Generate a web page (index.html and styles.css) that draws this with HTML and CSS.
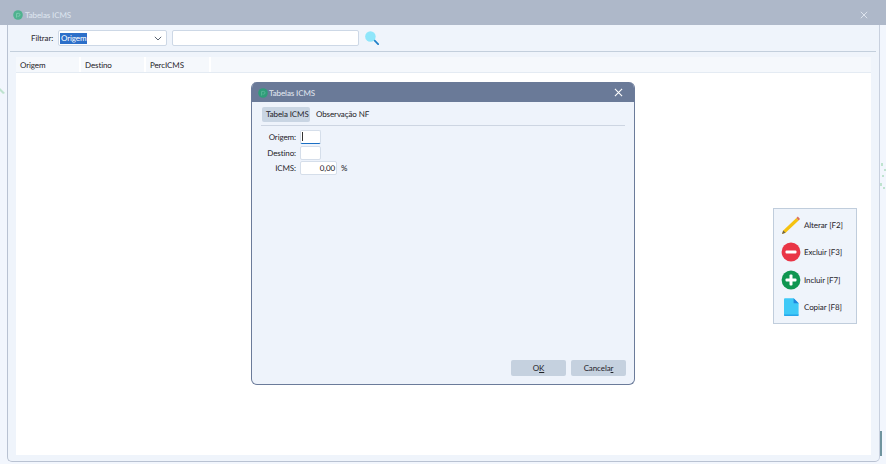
FILE: index.html
```html
<!DOCTYPE html>
<html lang="pt-BR">
<head>
    <meta charset="UTF-8">
    <meta name="viewport" content="width=device-width, initial-scale=1.0">
    <title>Tabelas ICMS</title>
    <link rel="stylesheet" href="styles.css">
</head>
<body>
    <div class="backdrop">
        <div class="window">
            <div class="titlebar">
                <svg class="app-icon faded" viewBox="0 0 10 10"><circle cx="5" cy="5" r="4.8"/><path d="M3.6 7.6V3.4h2a1.4 1.4 0 0 1 0 2.8H4.6"/></svg>
                <span class="title">Tabelas ICMS</span>
                <svg class="close faded-close" viewBox="0 0 10 10"><path d="M1 1l8 8M9 1l-8 8"/></svg>
            </div>
            <div class="filter-row">
                <label class="filter-label">Filtrar:</label>
                <div class="combo">
                    <span class="combo-value">Origem</span>
                    <svg class="chevron" viewBox="0 0 8 5"><path d="M.8.8L4 4l3.2-3.2"/></svg>
                </div>
                <div class="filter-input"></div>
                <svg class="search" viewBox="0 0 16 16">
                    <path class="search-handle" d="M10.5 10.5L15 15"/>
                    <circle class="search-glass" cx="6.2" cy="6.2" r="6"/>
                </svg>
            </div>
            <div class="grid">
                <div class="grid-head">
                    <div class="col col-origem">Origem</div>
                    <div class="col col-destino">Destino</div>
                    <div class="col col-perc">PercICMS</div>
                </div>
                <div class="grid-body"></div>
            </div>
        </div>
    </div>
    <svg class="specks specks-left" viewBox="0 0 6 20"><path d="M0 4l5 5-2 1-3-3z"/></svg>
    <svg class="specks specks-right" viewBox="0 0 6 40"><path d="M1 0h2v3H1zM4 6h2v2H4zM2 12h2v2H2zM0 20h2v3H0zM3 24h2v2H3z"/></svg>
    <div class="side-mark"></div>

    <div class="dialog">
        <div class="dialog-title">
            <svg class="app-icon" viewBox="0 0 10 10"><circle cx="5" cy="5" r="4.8"/><path d="M3.6 7.6V3.4h2a1.4 1.4 0 0 1 0 2.8H4.6"/></svg>
            <span class="title">Tabelas ICMS</span>
            <svg class="close" viewBox="0 0 10 10"><path d="M1 1l8 8M9 1l-8 8"/></svg>
        </div>
        <div class="dialog-body">
            <div class="tabs">
                <div class="tab active">Tabela ICMS</div>
                <div class="tab">Observação NF</div>
            </div>
            <div class="fields">
                <div class="field">
                    <label>Origem:</label>
                    <div class="input small focused"><span class="caret"></span></div>
                </div>
                <div class="field">
                    <label>Destino:</label>
                    <div class="input small"></div>
                </div>
                <div class="field">
                    <label>ICMS:</label>
                    <div class="input wide">0,00</div>
                    <span class="unit">%</span>
                </div>
            </div>
            <div class="actions">
                <button class="btn">O<u>K</u></button>
                <button class="btn">Cancela<u>r</u></button>
            </div>
        </div>
    </div>

    <div class="toolbar">
        <div class="tool">
            <svg class="tool-icon" viewBox="0 0 20 20">
                <path d="M1 19l1.2-3.6L15.4 3l2.2 2.4L4.6 17.8z" fill="#f5c211"/>
                <path d="M15.4 3l2.2 2.4 1.4-1.4-2.2-2.4z" fill="#d9705f"/>
                <path d="M1 19l1.2-3.6 2.4 2.4z" fill="#6b6252"/>
            </svg>
            <span>Alterar [F2]</span>
        </div>
        <div class="tool">
            <svg class="tool-icon" viewBox="0 0 20 20">
                <circle cx="10" cy="10" r="9.4" fill="#e93546"/>
                <rect x="4.5" y="8.4" width="11" height="3.2" rx="1" fill="#fff"/>
            </svg>
            <span>Excluir [F3]</span>
        </div>
        <div class="tool">
            <svg class="tool-icon" viewBox="0 0 20 20">
                <circle cx="10" cy="10" r="9.4" fill="#0f9650"/>
                <rect x="4.5" y="8.5" width="11" height="3" rx="1" fill="#fff"/>
                <rect x="8.5" y="4.5" width="3" height="11" rx="1" fill="#fff"/>
            </svg>
            <span>Incluir [F7]</span>
        </div>
        <div class="tool">
            <svg class="tool-icon" viewBox="0 0 20 20">
                <path d="M3 2.2a1 1 0 0 1 1-1h8.6l5 5V18a1 1 0 0 1-1 1H4a1 1 0 0 1-1-1z" fill="#3fc9f7"/>
                <path d="M12.6 1.2l5 5h-5z" fill="#1f86de"/>
                <path d="M3 17.6h14.6V18a1 1 0 0 1-1 1H4a1 1 0 0 1-1-1z" fill="#27a5ea"/>
            </svg>
            <span>Copiar [F8]</span>
        </div>
    </div>
</body>
</html>
```

FILE: styles.css
```css
* {
    box-sizing: border-box;
}

html, body {
    margin: 0;
    height: 100%;
    overflow: hidden;
}

body {
    font-family: 'Lato', 'Open Sans', sans-serif;
    font-size: 8px;
    letter-spacing: -0.1px;
    text-rendering: geometricPrecision;
    color: #1f2329;
    background: #f2f6fd;
}

.backdrop {
    height: 464px;
    padding: 0 6px 2px 7px;
    background: #f2f6fd;
}

.window {
    height: 100%;
    display: flex;
    flex-direction: column;
    background: #eff4fb;
    border-left: 1px solid #b9c2d2;
    border-right: 1px solid #c8d0de;
    border-bottom: 1px solid #b9c2d2;
    border-radius: 0 0 5px 5px;
}

.titlebar {
    height: 25px;
    flex: none;
    margin: 0 -7px 0 -8px;
    padding: 4px 18px 0 13px;
    display: flex;
    align-items: center;
    background: #aeb8c9;
    color: #dfe6f0;
}

.title {
    margin-left: 2px;
}

.app-icon {
    width: 10px;
    height: 10px;
    flex: none;
}

.app-icon circle {
    fill: #2f9d79;
}

.app-icon path {
    fill: none;
    stroke: #57b597;
    stroke-width: 1;
}

.app-icon.faded circle {
    fill: #4fb28f;
}

.app-icon.faded path {
    stroke: #7fcbb0;
}

.close {
    width: 8px;
    height: 8px;
    margin-left: auto;
    fill: none;
    stroke: #fff;
    stroke-width: 1.2;
}

.faded-close {
    stroke: #dfe5ee;
}

.filter-row {
    height: 27px;
    flex: none;
    margin: 0 3px 0 2px;
    padding: 0 0 0 21px;
    display: flex;
    align-items: center;
    border-bottom: 1px solid #c3cfdc;
}

.filter-label {
    width: 27px;
    flex: none;
}

.combo {
    width: 109px;
    height: 16px;
    flex: none;
    padding: 0 4px 0 1px;
    display: flex;
    align-items: center;
    justify-content: space-between;
    background: #fff;
    border: 1px solid #cdd8e6;
    border-radius: 2px;
}

.combo-value {
    padding: 0 1px;
    background: #2c6fc9;
    color: #fff;
    line-height: 11px;
}

.chevron {
    width: 8px;
    height: 5px;
    fill: none;
    stroke: #5a6472;
    stroke-width: 1;
}

.filter-input {
    width: 187px;
    height: 16px;
    flex: none;
    margin-left: 5px;
    background: #fff;
    border: 1px solid #cdd8e6;
    border-radius: 2px;
}

.search {
    width: 14px;
    height: 14px;
    margin-left: 6px;
    flex: none;
}

.search-glass {
    fill: #8fe6fa;
}

.search-handle {
    stroke: #1f7fc8;
    stroke-width: 2;
    stroke-linecap: round;
}

.grid {
    flex: 1;
    display: flex;
    flex-direction: column;
    margin: 5px 8px 6px 8px;
}

.grid-head {
    height: 16px;
    flex: none;
    display: flex;
    background: #f5f8fc;
    border-bottom: 1px solid #e4ebf3;
}

.col {
    padding: 2px 0 0 4px;
    border-right: 2px solid #fff;
    line-height: 12px;
}

.col-origem {
    width: 65px;
}

.col-destino {
    width: 65px;
}

.col-perc {
    width: 65px;
}

.grid-body {
    flex: 1;
    background: #fff;
}

.specks {
    position: absolute;
    width: 6px;
    fill: #bfe3cf;
}

.specks-left {
    left: 0;
    top: 84px;
    height: 20px;
}

.specks-right {
    left: 880px;
    top: 163px;
    height: 40px;
}

.side-mark {
    position: absolute;
    left: 880px;
    top: 431px;
    width: 2px;
    height: 25px;
    background: #6f949e;
}

.dialog {
    position: absolute;
    left: 251px;
    top: 82px;
    width: 384px;
    height: 303px;
    display: flex;
    flex-direction: column;
    border-radius: 6px;
    overflow: hidden;
    border: 1px solid #6b7b9a;
    border-top: 0;
    background: #eef3fb;
}

.dialog-title {
    height: 20px;
    flex: none;
    padding: 1px 11px 0 6px;
    display: flex;
    align-items: center;
    background: #6a7a98;
    color: #e4e9f2;
}

.dialog-title .title {
    margin-left: 1px;
}

.dialog-title .close {
    width: 9px;
    height: 9px;
}

.dialog-body {
    flex: 1;
    display: flex;
    flex-direction: column;
    padding: 5px 8px 8px 9px;
}

.tabs {
    display: flex;
    padding: 0 0 3px 1px;
    border-bottom: 1px solid #cdd5e2;
    margin-right: 1px;
}

.tab {
    height: 15px;
    padding: 0 4px;
    margin-right: 2px;
    line-height: 14px;
    border-radius: 2px;
}

.tab.active {
    width: 48px;
    background: #c9d5e3;
    white-space: nowrap;
}

.fields {
    padding-top: 4px;
    display: flex;
    flex-direction: column;
    gap: 1.5px;
}

.field {
    height: 14px;
    display: flex;
    align-items: center;
}

.field label {
    width: 35px;
    margin-right: 4px;
    text-align: right;
    white-space: nowrap;
}

.input {
    height: 14px;
    background: #fff;
    border: 1px solid #d5deea;
    border-radius: 2px;
    line-height: 12px;
}

.input.small {
    width: 21px;
    padding: 1px 0 0 1px;
}

.input.wide {
    width: 37px;
    padding-right: 1px;
    text-align: right;
}

.input.focused {
    border-bottom: 1px solid #1a6fc4;
}

.caret {
    display: block;
    width: 1px;
    height: 9px;
    background: #333;
}

.unit {
    margin-left: 4px;
}

.actions {
    margin-top: auto;
    display: flex;
    justify-content: flex-end;
    gap: 5px;
}

.btn {
    width: 55px;
    height: 16px;
    padding: 0;
    font: inherit;
    letter-spacing: inherit;
    color: #1f2329;
    background: #c5d1df;
    border: none;
    border-radius: 2px;
}

.toolbar {
    position: absolute;
    left: 773px;
    top: 208px;
    width: 84px;
    height: 116px;
    display: flex;
    flex-direction: column;
    padding: 2px 0 2px 7px;
    background: #eff4fb;
    border: 1px solid #c0cddc;
}

.tool {
    height: 28px;
    display: flex;
    align-items: center;
    gap: 3px;
}

.tool-icon {
    width: 20px;
    height: 20px;
    flex: none;
}
```
